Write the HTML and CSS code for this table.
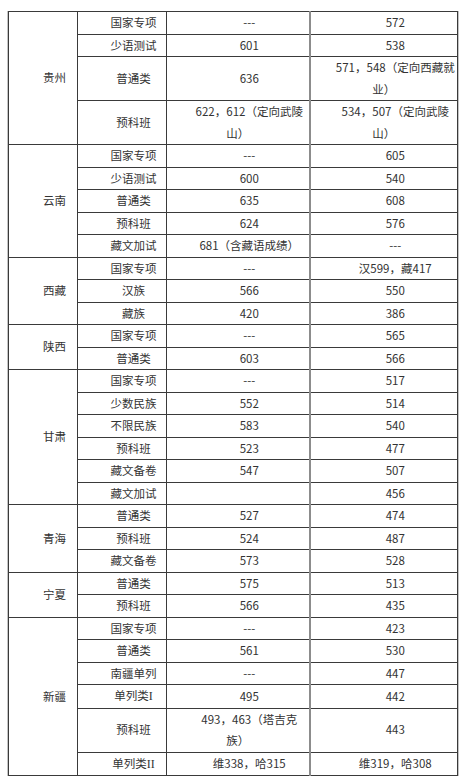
FILE: index.html
```html
<!DOCTYPE html>
<html lang="zh-CN">
<head>
<meta charset="utf-8">
<title>分数线</title>
<link rel="stylesheet" href="styles.css">
</head>
<body>
<table class="score">
  <colgroup>
    <col class="c1"><col class="c2"><col class="c3"><col class="c4">
  </colgroup>
  <tbody>
    <tr><td rowspan="4" class="prov">贵州</td><td>国家专项</td><td>---</td><td class="last">572</td></tr>
    <tr><td>少语测试</td><td>601</td><td class="last">538</td></tr>
    <tr><td>普通类</td><td>636</td><td class="last">571<span class="pn">，</span>548<span class="pn">（</span>定向西藏就<br>业<span class="pn">）</span></td></tr>
    <tr><td>预科班</td><td>622<span class="pn">，</span>612<span class="pn">（</span>定向武陵<br>山<span class="pn">）</span></td><td class="last">534<span class="pn">，</span>507<span class="pn">（</span>定向武陵<br>山<span class="pn">）</span></td></tr>

    <tr><td rowspan="5" class="prov">云南</td><td>国家专项</td><td>---</td><td class="last">605</td></tr>
    <tr><td>少语测试</td><td>600</td><td class="last">540</td></tr>
    <tr><td>普通类</td><td>635</td><td class="last">608</td></tr>
    <tr><td>预科班</td><td>624</td><td class="last">576</td></tr>
    <tr><td>藏文加试</td><td>681<span class="pn">（</span>含藏语成绩<span class="pn">）</span></td><td class="last">---</td></tr>

    <tr><td rowspan="3" class="prov">西藏</td><td>国家专项</td><td>---</td><td class="last">汉599<span class="pn">，</span>藏417</td></tr>
    <tr><td>汉族</td><td>566</td><td class="last">550</td></tr>
    <tr><td>藏族</td><td>420</td><td class="last">386</td></tr>

    <tr><td rowspan="2" class="prov">陕西</td><td>国家专项</td><td>---</td><td class="last">565</td></tr>
    <tr><td>普通类</td><td>603</td><td class="last">566</td></tr>

    <tr><td rowspan="6" class="prov">甘肃</td><td>国家专项</td><td>---</td><td class="last">517</td></tr>
    <tr><td>少数民族</td><td>552</td><td class="last">514</td></tr>
    <tr><td>不限民族</td><td>583</td><td class="last">540</td></tr>
    <tr><td>预科班</td><td>523</td><td class="last">477</td></tr>
    <tr><td>藏文备卷</td><td>547</td><td class="last">507</td></tr>
    <tr><td>藏文加试</td><td></td><td class="last">456</td></tr>

    <tr><td rowspan="3" class="prov">青海</td><td>普通类</td><td>527</td><td class="last">474</td></tr>
    <tr><td>预科班</td><td>524</td><td class="last">487</td></tr>
    <tr><td>藏文备卷</td><td>573</td><td class="last">528</td></tr>

    <tr><td rowspan="2" class="prov">宁夏</td><td>普通类</td><td>575</td><td class="last">513</td></tr>
    <tr><td>预科班</td><td>566</td><td class="last">435</td></tr>

    <tr><td rowspan="6" class="prov">新疆</td><td>国家专项</td><td>---</td><td class="last">423</td></tr>
    <tr><td>普通类</td><td>561</td><td class="last">530</td></tr>
    <tr><td>南疆单列</td><td>---</td><td class="last">447</td></tr>
    <tr><td>单列类<span class="rn">I</span></td><td>495</td><td class="last">442</td></tr>
    <tr><td>预科班</td><td>493<span class="pn">，</span>463<span class="pn">（</span>塔吉克<br>族<span class="pn">）</span></td><td class="last">443</td></tr>
    <tr><td>单列类<span class="rn">II</span></td><td>维338<span class="pn">，</span>哈315</td><td class="last">维319<span class="pn">，</span>哈308</td></tr>
  </tbody>
</table>
</body>
</html>
```

FILE: styles.css
```css
html, body {
  margin: 0;
  padding: 0;
  background: #ffffff;
}

body {
  font-family: "Noto Sans CJK SC", "Noto Sans", sans-serif;
  font-size: 11.5px;
  color: #333333;
}

.score {
  margin: 11px 0 0 8px;
  width: 449px;
  border-collapse: collapse;
  table-layout: fixed;
  box-shadow: -1px 0 0 #c4c4c4, 1px 0 0 #c4c4c4;
}

.c1 { width: 69px; }
.c2 { width: 89px; }
.c3 { width: 143px; }
.c4 { width: 148px; }

.score td {
  border: 1px solid #3a3a3a;
  padding: 0;
  line-height: 21.5px;
  text-align: center;
  text-indent: 2em;
  vertical-align: middle;
  white-space: nowrap;
}

.score td.last {
  border-left: 2px solid #8c8c8c;
}

.pn {
  font-family: "Noto Sans CJK TC", "Noto Sans CJK SC", sans-serif;
}

.rn {
  font-family: "Liberation Serif", serif;
  font-size: 12px;
}
```
